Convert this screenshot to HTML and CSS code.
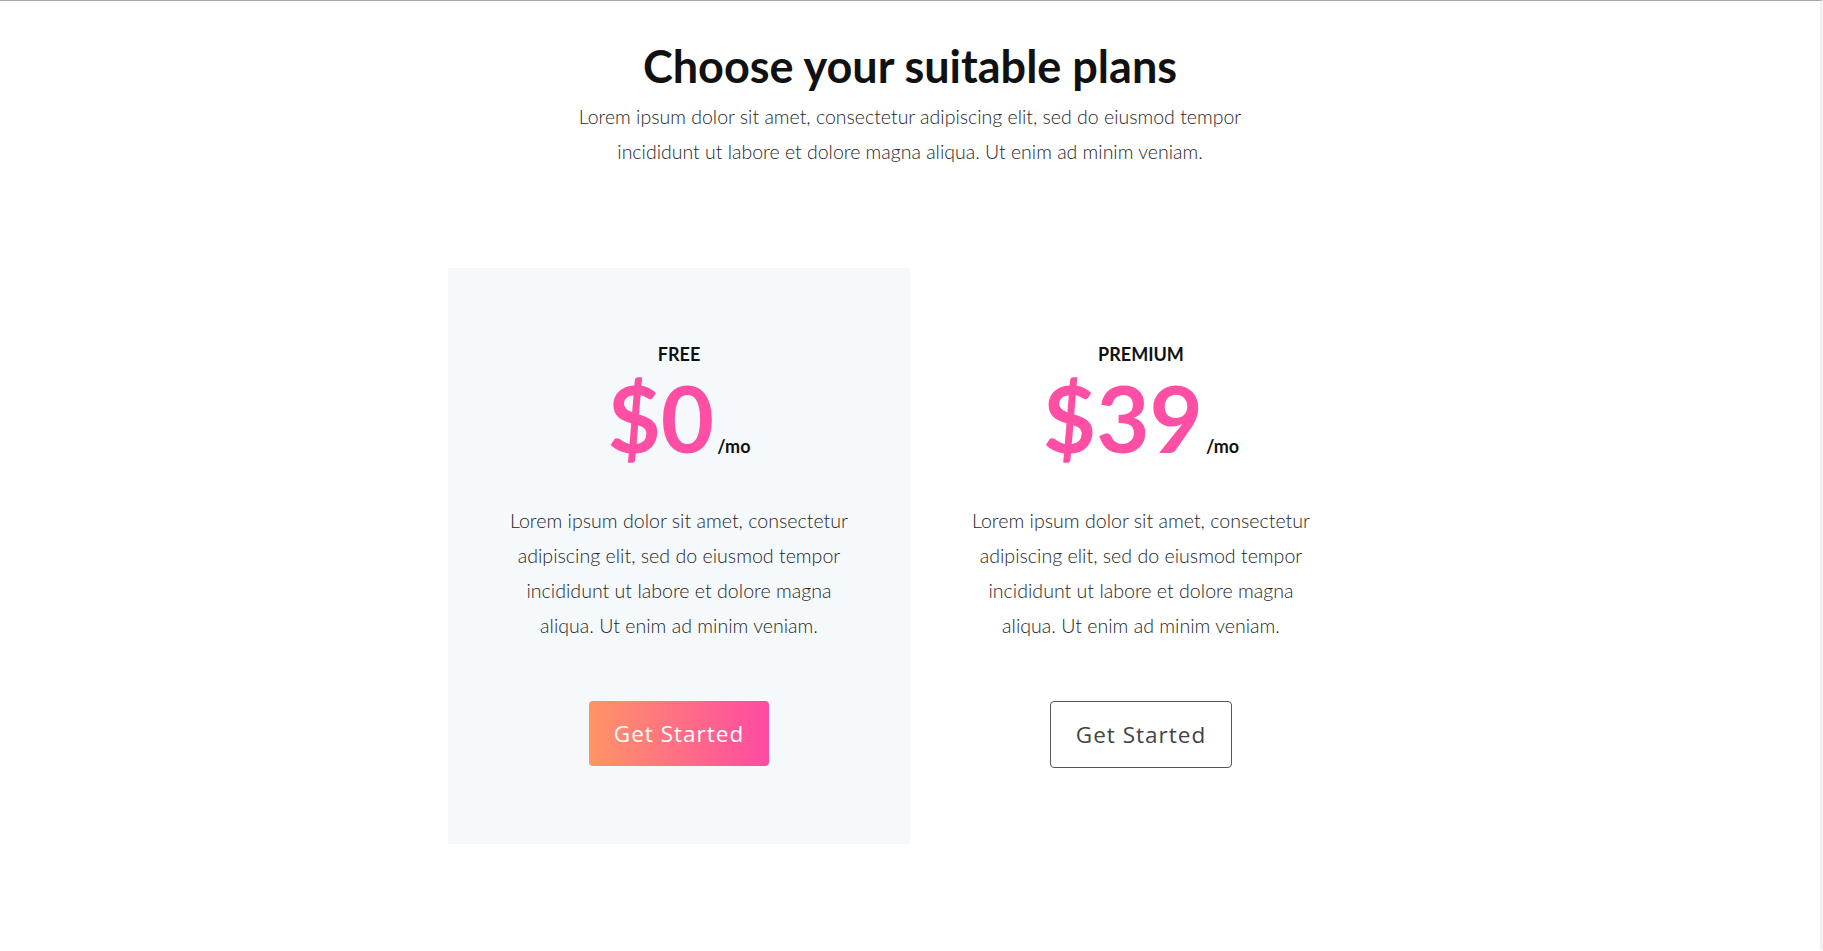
FILE: index.html
```html
<!DOCTYPE html>
<html lang="en">
<head>
    <meta charset="UTF-8">
    <meta name="viewport" content="width=device-width, initial-scale=1.0">
    <title>Pricing Plans</title>
    <link rel="stylesheet" href="styles.css">
</head>
<body>
    <section class="pricing">
        <div class="pricing-head">
            <h1>Choose your suitable plans</h1>
            <p>Lorem ipsum dolor sit amet, consectetur adipiscing elit, sed do eiusmod tempor<br>incididunt ut labore et dolore magna aliqua. Ut enim ad minim veniam.</p>
        </div>
        <div class="plans">
            <div class="plan active">
                <h3>FREE</h3>
                <div class="price">$0<span>/mo</span></div>
                <p>Lorem ipsum dolor sit amet, consectetur adipiscing elit, sed do eiusmod tempor incididunt ut labore et dolore magna aliqua. Ut enim ad minim veniam.</p>
                <a href="#" class="btn btn-gradient">Get Started</a>
            </div>
            <div class="plan">
                <h3>PREMIUM</h3>
                <div class="price">$39<span>/mo</span></div>
                <p>Lorem ipsum dolor sit amet, consectetur adipiscing elit, sed do eiusmod tempor incididunt ut labore et dolore magna aliqua. Ut enim ad minim veniam.</p>
                <a href="#" class="btn btn-outline">Get Started</a>
            </div>
        </div>
    </section>
</body>
</html>
```

FILE: styles.css
```css
body {
    font-family: 'Lato', 'Liberation Sans', sans-serif;
    margin: 0;
    padding: 0;
    background: #ffffff;
    color: #333333;
    border-top: 1px solid #a8a8a8;
    border-right: 3px solid #f1f1f1;
    min-height: 950px;
    box-sizing: border-box;
}

.pricing {
    padding-top: 38px;
}

.pricing-head {
    text-align: center;
}

.pricing-head h1 {
    font-size: 45px;
    font-weight: 700;
    line-height: 1.2;
    color: #111111;
    margin: 0 0 6px;
}

.pricing-head p {
    font-size: 19.5px;
    font-weight: 300;
    line-height: 35px;
    color: #262626;
    margin: 0;
}

.plans {
    display: flex;
    justify-content: center;
    margin-top: 99px;
}

.plan {
    width: 462px;
    box-sizing: border-box;
    padding: 75px 50px 76px;
    text-align: center;
}

.plan.active {
    background: #f6f9fc;
}

.plan h3 {
    font-size: 18px;
    font-weight: 700;
    line-height: 22px;
    color: #111111;
    margin: 0 0 7px;
}

.price {
    font-size: 92px;
    font-weight: 700;
    line-height: 1;
    color: #ff4fa4;
}

.price span {
    font-size: 18px;
    color: #111111;
    margin-left: 3px;
}

.plan p {
    font-size: 19.6px;
    font-weight: 300;
    line-height: 35px;
    color: #262626;
    margin: 39px 0 0;
}

.btn {
    display: inline-block;
    margin-top: 58px;
    padding: 20px 25px;
    font-family: 'Open Sans', 'Liberation Sans', sans-serif;
    font-size: 22.5px;
    letter-spacing: 1px;
    line-height: 25px;
    text-decoration: none;
    border-radius: 4px;
}

.btn-gradient {
    color: #ffffff;
    background: linear-gradient(90deg, #ff9466, #ff4aa3);
}

.btn-outline {
    color: #444444;
    border: 1px solid #555555;
    background: #ffffff;
}
```
